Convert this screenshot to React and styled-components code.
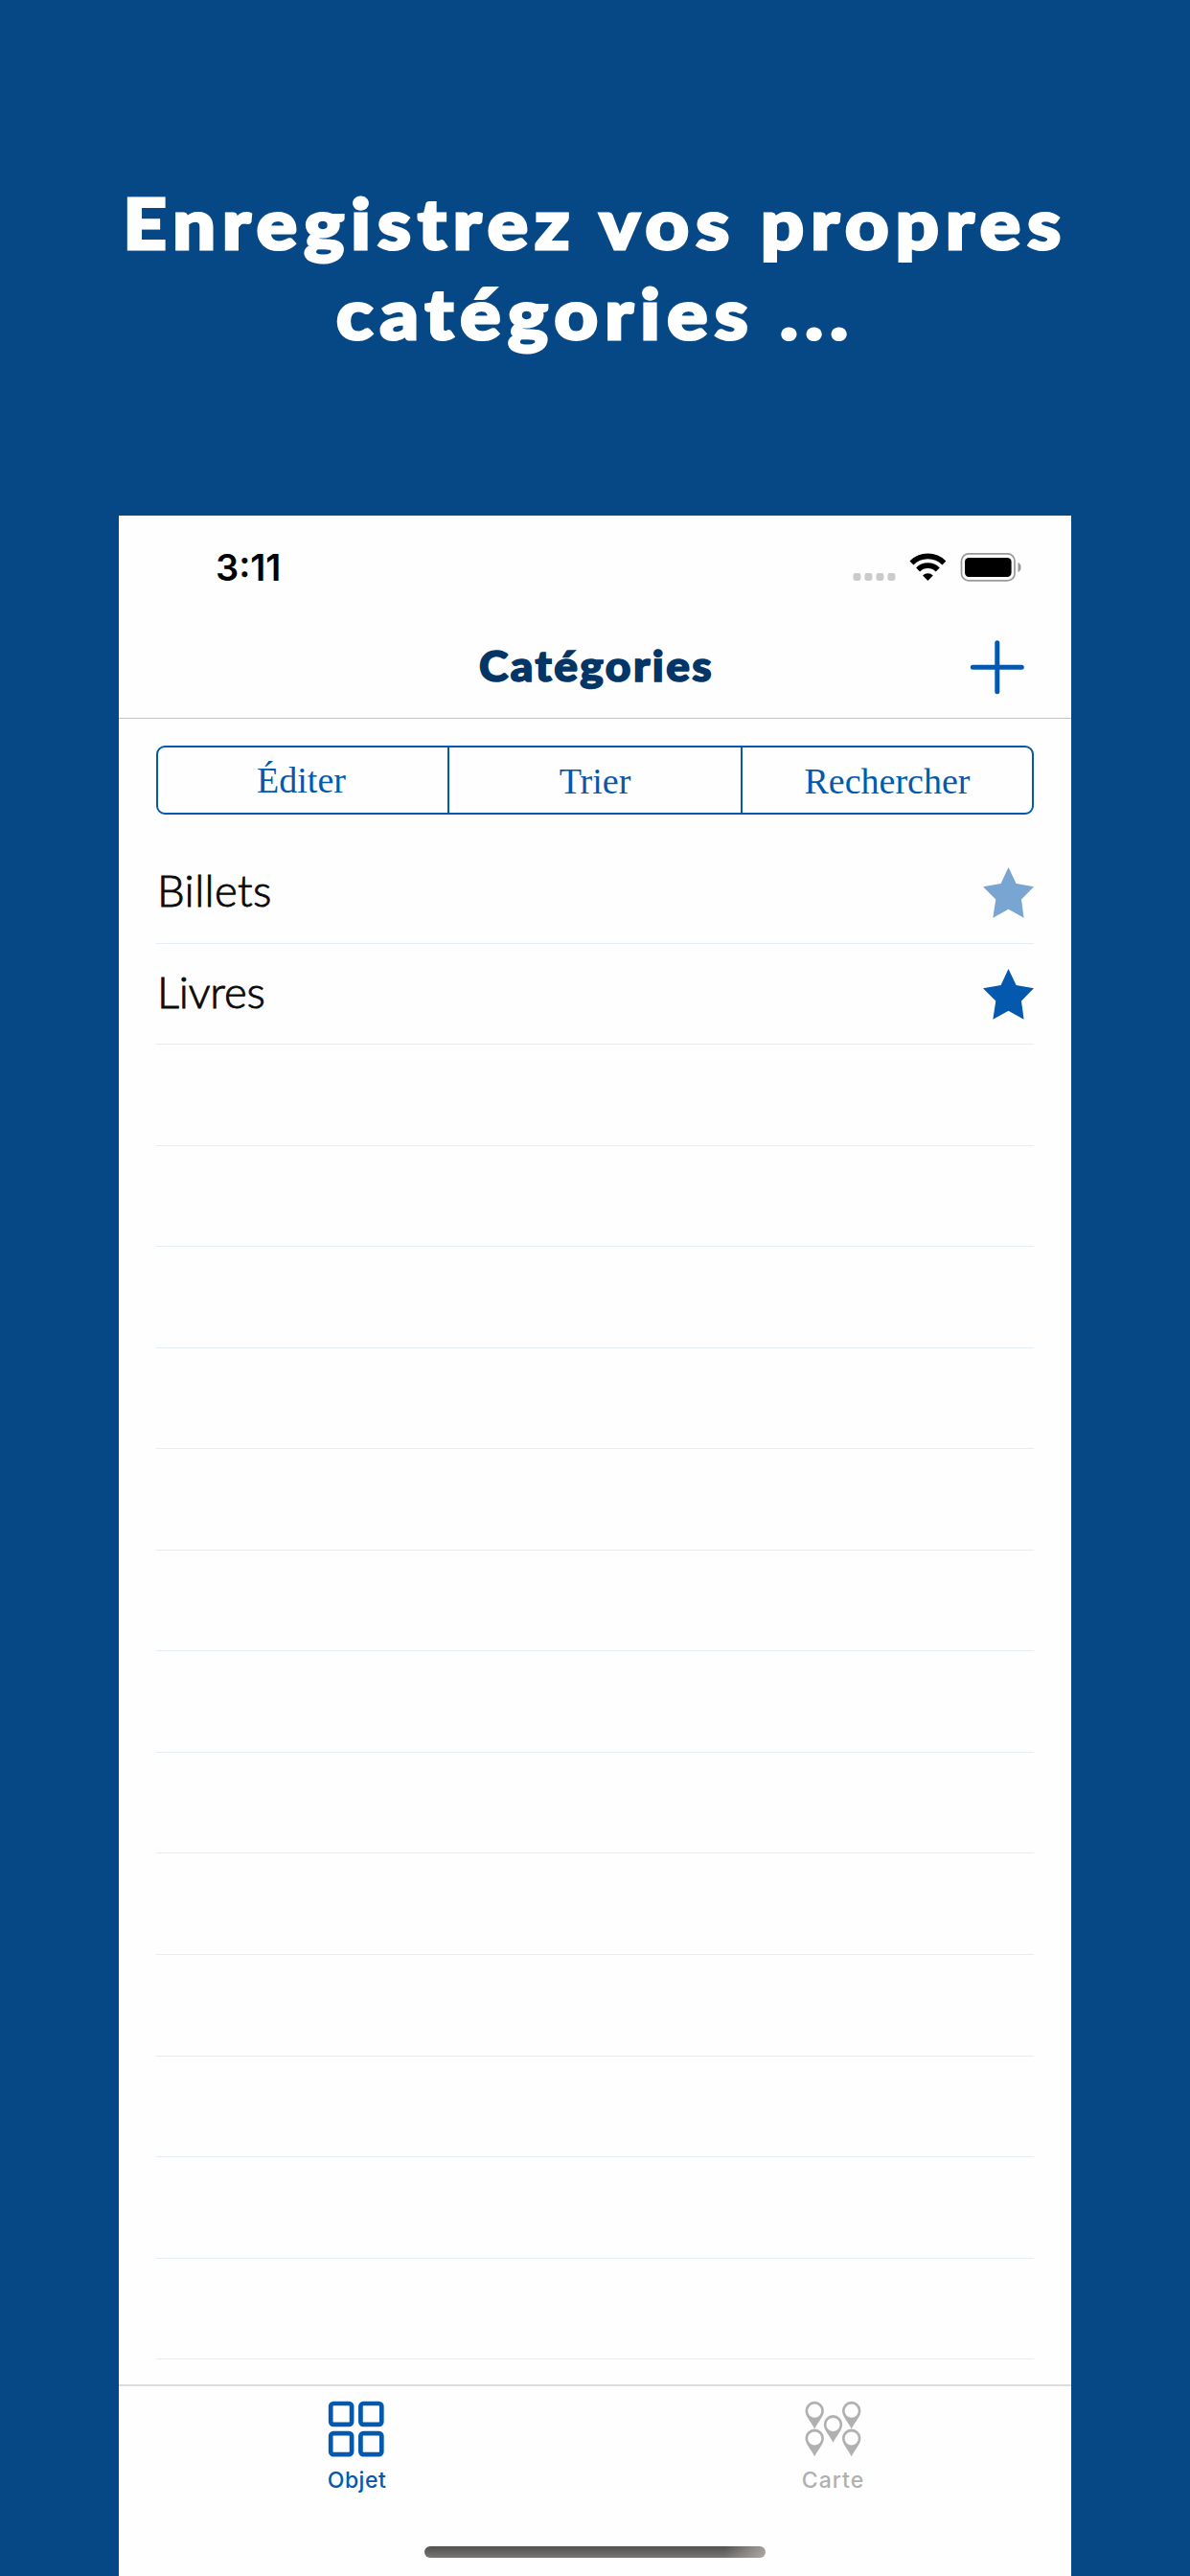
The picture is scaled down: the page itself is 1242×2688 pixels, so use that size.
import React from "react";
import styled, { createGlobalStyle } from "styled-components";

const GlobalStyle = createGlobalStyle`
  * { box-sizing: border-box; }
  html, body { margin: 0; padding: 0; background: #064886; }
`;

const Page = styled.main`
  width: 1242px;
  height: 2688px;
  display: flex;
  flex-direction: column;
  align-items: center;
  overflow: hidden;
  background: #064886;
`;

const Headline = styled.h1`
  width: 100%;
  height: 538px;
  margin: 0;
  padding: 185px 5px 0 0;
  display: flex;
  flex-direction: column;
  align-items: center;
  color: #fff;
  font: 900 73px/94px Lato, sans-serif;
  -webkit-text-stroke: 3px #fff;
`;

const HeadlineLine = styled.span`
  white-space: nowrap;
  letter-spacing: ${(p) => p.$spacing}px;
  margin-right: -${(p) => p.$spacing}px;
  transform: scaleX(1.08);
`;

const Phone = styled.section`
  width: 994px;
  height: 2150px;
  display: flex;
  flex-direction: column;
  background: #fefefe;
`;

const StatusBar = styled.div`
  height: 108px;
  padding: 32px 51px 0 101px;
  display: flex;
  justify-content: space-between;
  align-items: flex-start;
`;

const Clock = styled.span`
  color: #000;
  font: 600 38px/44px Inter, sans-serif;
`;

const StatusIcons = styled.svg`
  width: 177px;
  height: 32px;
  margin-top: 6px;
`;

const NavBar = styled.header`
  height: 104px;
  padding: 0 48px;
  display: grid;
  grid-template-columns: 58px 1fr 58px;
  align-items: center;
  border-bottom: 1px solid #c4c4c4;
`;

const NavTitle = styled.h2`
  grid-column: 2;
  margin: 0;
  padding: 0 0 8px 3px;
  text-align: center;
  color: #033567;
  font: 900 43.5px/56px Lato, sans-serif;
  letter-spacing: ${(p) => p.$spacing}px;
  -webkit-text-stroke: 1.6px #033567;
  transform: scaleX(1.06);
`;

const AddIcon = styled.svg`
  width: 58px;
  height: 58px;
  margin: -4px 0 0 0;
`;

const Segments = styled.div`
  height: 72px;
  margin: 28px 39px 0;
  display: grid;
  grid-template-columns: 304px 306px 1fr;
  border: 2px solid #0459ae;
  border-radius: 9px;
`;

const Segment = styled.button`
  margin: 0;
  padding: ${(p) => p.$top}px ${(p) => p.$right || 0}px 0 0;
  border: 0;
  border-right: ${(p) => (p.$last ? "0" : "2px solid #0459ae")};
  background: transparent;
  color: #0459ae;
  font: 400 38px/44px "Liberation Serif", serif;
`;

const List = styled.ul`
  flex: 1;
  margin: 29px 39px 0;
  padding: 0;
  list-style: none;
`;

const Row = styled.li`
  height: 105.55px;
  display: flex;
  justify-content: space-between;
  border-bottom: 1px solid #e4edf5;
`;

const RowLabel = styled.span`
  padding: 22px 0 0 1px;
  color: #0a0a0a;
  font: 300 45.5px/56px Lato, sans-serif;
  letter-spacing: ${(p) => p.$spacing}px;
  -webkit-text-stroke: 0.9px #0a0a0a;
`;

const StarIcon = styled.svg`
  width: 53px;
  height: 53px;
  margin-top: 26px;
`;

const TabBar = styled.nav`
  height: 200px;
  display: grid;
  grid-template-columns: 1fr 1fr;
  grid-template-rows: 167px 33px;
  justify-items: center;
  border-top: 2px solid #dcdcdc;
`;

const Tab = styled.button`
  margin: 0;
  padding: 15px 0 0;
  border: 0;
  background: transparent;
  display: flex;
  flex-direction: column;
  align-items: center;
  gap: 7px;
  color: ${(p) => (p.$active ? "#0459ae" : "#b0b0b0")};
  font: 500 23px/32px Inter, sans-serif;
  letter-spacing: ${(p) => p.$spacing}px;
`;

const TabIcon = styled.svg`
  width: 60px;
  height: 60px;
`;

const HomeIndicator = styled.div`
  grid-column: 1 / -1;
  width: 356px;
  height: 12px;
  border-radius: 6px;
  background: linear-gradient(to right, transparent 88%, rgba(190, 184, 180, 0.75) 100%),
    linear-gradient(#505050, #797673);
`;

const STAR = "26.5,0 34.6,17 53,20.2 40,33.4 42.6,52.7 26.5,43.7 10.3,52.7 13.3,33.4 0,20.2 18.6,17";

function Star({ color }) {
  return (
    <StarIcon viewBox="0 0 53 53">
      <polygon points={STAR} fill={color} />
    </StarIcon>
  );
}

function Status() {
  return (
    <StatusIcons viewBox="0 0 177 32">
      <g fill="#cbcbcb">
        {[0, 12, 24, 36].map((x) => (
          <rect key={x} x={x + 0.4} y="22" width="8" height="8" rx="2.4" />
        ))}
      </g>
      <g fill="none" stroke="#000" strokeWidth="5.6">
        <path d="M61.4 11.4 A24 24 0 0 1 95.4 11.4" />
        <path d="M68.1 18.4 A14.6 14.6 0 0 1 88.7 18.4" />
      </g>
      <path d="M78.4 30 L73 24.4 A7.8 7.8 0 0 1 83.8 24.4 Z" fill="#000" />
      <rect x="113.5" y="1.9" width="55.5" height="28" rx="7.5" fill="none" stroke="#999" strokeWidth="1.7" />
      <rect x="117" y="6" width="48.6" height="20" rx="4.2" fill="#000" />
      <path d="M172.5 11 C176.7 12.7 176.7 19.3 172.5 21 Z" fill="#999" />
    </StatusIcons>
  );
}

function Pin({ x, y }) {
  return (
    <g transform={`translate(${x} ${y})`}>
      <path
        fillRule="evenodd"
        fill="currentColor"
        d="M9.7 0 A9.7 9.7 0 0 1 19.4 9.7 C19.4 15.5 14 20.5 9.7 28.6 C5.4 20.5 0 15.5 0 9.7 A9.7 9.7 0 0 1 9.7 0 Z M9.7 2.8 A7.1 7.1 0 1 0 9.7 17 A7.1 7.1 0 1 0 9.7 2.8 Z"
      />
    </g>
  );
}

const rows = [
  { label: "Billets", color: "#78a5d1", spacing: 0.4 },
  { label: "Livres", color: "#0459ae", spacing: -0.2 },
  ...Array.from({ length: 13 }, () => ({})),
];

export default function App() {
  return (
    <Page>
      <GlobalStyle />
      <Headline>
        <HeadlineLine $spacing={6.6}>Enregistrez vos propres</HeadlineLine>
        <HeadlineLine $spacing={6.8}>catégories ...</HeadlineLine>
      </Headline>
      <Phone>
        <StatusBar>
          <Clock>3:11</Clock>
          <Status />
        </StatusBar>
        <NavBar>
          <NavTitle $spacing={2.3}>Catégories</NavTitle>
          <AddIcon viewBox="0 0 58 58">
            <path d="M28.8 3.7V54.7M3.3 29.2H54.3" stroke="#0459ae" strokeWidth="5" strokeLinecap="round" />
          </AddIcon>
        </NavBar>
        <Segments>
          <Segment $top={0} $right={3}>Éditer</Segment>
          <Segment $top={2}>Trier</Segment>
          <Segment $top={2} $last>Rechercher</Segment>
        </Segments>
        <List>
          {rows.map((row, i) => (
            <Row key={i}>
              {row.label && <RowLabel $spacing={row.spacing}>{row.label}</RowLabel>}
              {row.label && <Star color={row.color} />}
            </Row>
          ))}
        </List>
        <TabBar>
          <Tab $active $spacing={0.5}>
            <TabIcon viewBox="0 0 60 60">
              <g fill="none" stroke="currentColor" strokeWidth="4.7">
                {[3.2, 34.4].map((x) =>
                  [3, 34.2].map((y) => <rect key={`${x}-${y}`} x={x} y={y} width="21.9" height="21.9" rx="2.8" />)
                )}
              </g>
            </TabIcon>
            Objet
          </Tab>
          <Tab $spacing={1}>
            <TabIcon viewBox="0 0 60 60">
              <Pin x={0.5} y={0.8} />
              <Pin x={39} y={0.8} />
              <Pin x={19.8} y={15.1} />
              <Pin x={0.5} y={29.6} />
              <Pin x={39} y={29.6} />
            </TabIcon>
            Carte
          </Tab>
          <HomeIndicator />
        </TabBar>
      </Phone>
    </Page>
  );
}
